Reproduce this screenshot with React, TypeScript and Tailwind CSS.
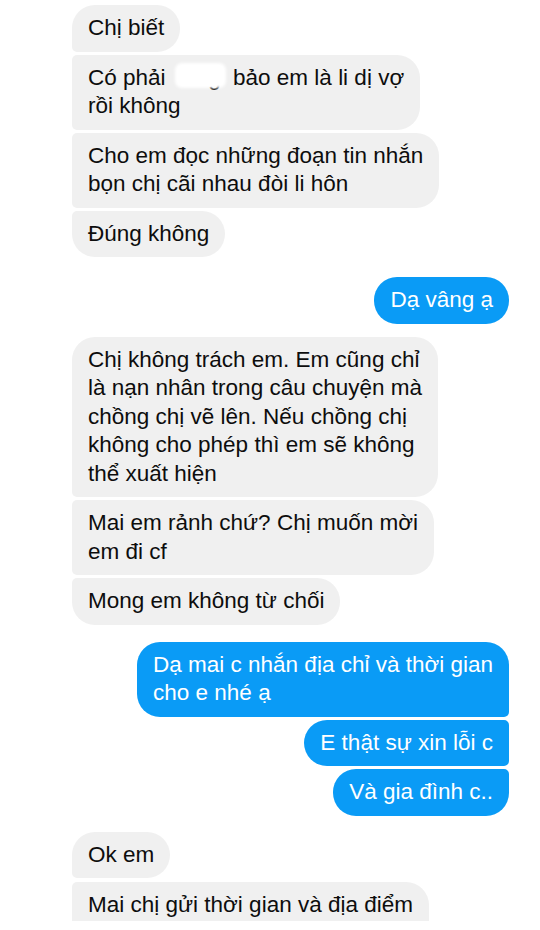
import React from "react";

type BubbleProps = {
  sent?: boolean;
  radius: string;
  extra?: string;
  children: React.ReactNode;
};

function Bubble({ sent, radius, extra = "", children }: BubbleProps) {
  const base = sent
    ? "bg-[#0a9bf6] text-white self-end"
    : "bg-[#f0f0f0] text-[#0d0d0d] self-start";
  return (
    <div
      className={`${base} ${radius} ${extra} whitespace-nowrap px-[16px] py-[9px] text-[22.5px] leading-[28.5px]`}
    >
      {children}
    </div>
  );
}

function Redacted() {
  return (
    <span className="relative inline-block h-[20px] w-[55px] align-baseline">
      <span className="absolute bottom-[-7px] right-[6px] leading-[28px] text-[#0d0d0d]">g</span>
      <span className="absolute left-[3px] right-[1px] top-[-2px] bottom-[-3px] rounded-[7px] bg-white blur-[1.5px]" />
    </span>
  );
}

export default function App() {
  return (
    <div
      className="flex h-[930px] w-[540px] flex-col overflow-hidden bg-white pl-[72px] pr-[31px] pt-[5px]"
      style={{ fontFamily: '"Liberation Sans", Arial, sans-serif' }}
    >
      <div className="flex flex-col gap-[3px]">
        <Bubble radius="rounded-[23px] rounded-bl-[5px]">Chị biết</Bubble>
        <Bubble radius="rounded-[23px] rounded-tl-[5px] rounded-bl-[5px]">
          Có phải <Redacted /> bảo em là li dị vợ
          <br />
          rồi không
        </Bubble>
        <Bubble radius="rounded-[23px] rounded-tl-[5px] rounded-bl-[5px]">
          Cho em đọc những đoạn tin nhắn
          <br />
          bọn chị cãi nhau đòi li hôn
        </Bubble>
        <Bubble radius="rounded-[23px] rounded-tl-[5px]">Đúng không</Bubble>
      </div>

      <div className="mt-[20px] flex flex-col gap-[3px]">
        <Bubble sent radius="rounded-[23px]">Dạ vâng ạ</Bubble>
      </div>

      <div className="mt-[13px] flex flex-col gap-[3px]">
        <Bubble radius="rounded-[23px] rounded-bl-[5px]">
          Chị không trách em. Em cũng chỉ
          <br />
          là nạn nhân trong câu chuyện mà
          <br />
          chồng chị vẽ lên. Nếu chồng chị
          <br />
          không cho phép thì em sẽ không
          <br />
          thể xuất hiện
        </Bubble>
        <Bubble radius="rounded-[23px] rounded-tl-[5px] rounded-bl-[5px]">
          Mai em rảnh chứ? Chị muốn mời
          <br />
          em đi cf
        </Bubble>
        <Bubble radius="rounded-[23px] rounded-tl-[5px]">Mong em không từ chối</Bubble>
      </div>

      <div className="mt-[17px] flex flex-col gap-[3px]">
        <Bubble sent radius="rounded-[23px] rounded-br-[5px]">
          Dạ mai c nhắn địa chỉ và thời gian
          <br />
          cho e nhé ạ
        </Bubble>
        <Bubble sent radius="rounded-[23px] rounded-tr-[5px] rounded-br-[5px]">
          E thật sự xin lỗi c
        </Bubble>
        <Bubble sent radius="rounded-[23px] rounded-tr-[5px]">Và gia đình c..</Bubble>
      </div>

      <div className="mt-[16px] flex flex-col gap-[4px]">
        <Bubble radius="rounded-[23px] rounded-bl-[5px]">Ok em</Bubble>
        <Bubble
          radius="rounded-tl-[5px] rounded-tr-[23px]"
          extra="h-[39px] overflow-hidden"
        >
          Mai chị gửi thời gian và địa điểm
        </Bubble>
      </div>
    </div>
  );
}
